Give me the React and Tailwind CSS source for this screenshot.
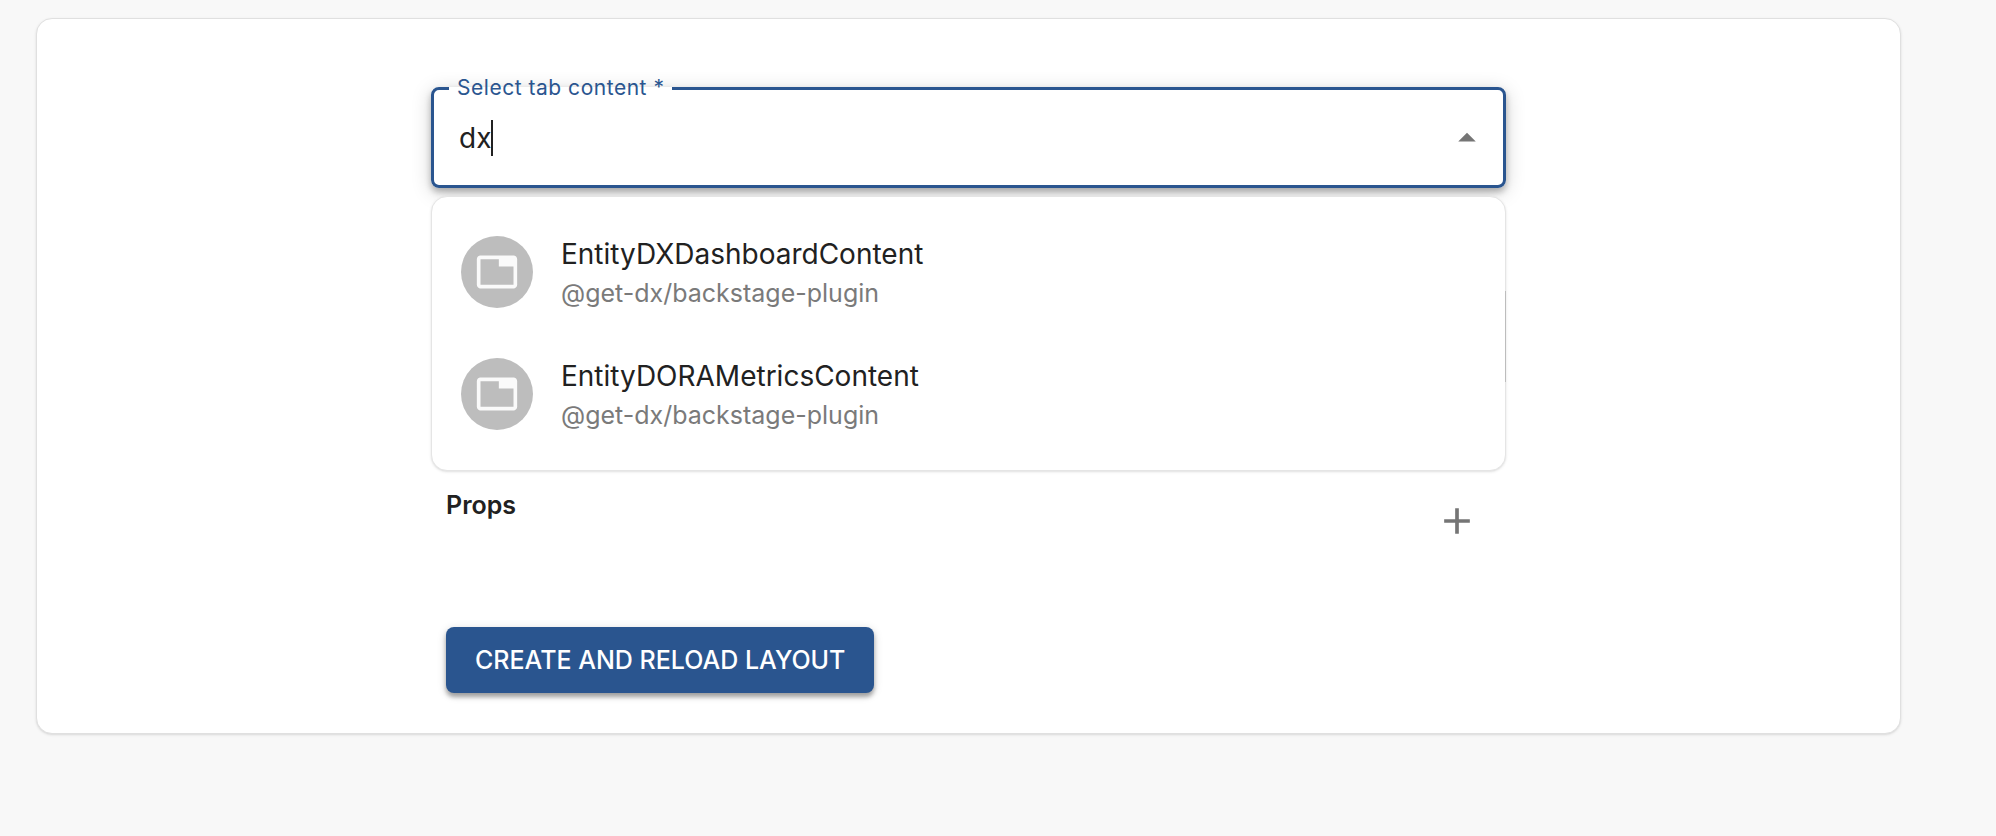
import React, { useState } from 'react';
import { MdAdd, MdArrowDropUp, MdTab } from 'react-icons/md';

const options = [
  { name: 'EntityDXDashboardContent', source: '@get-dx/backstage-plugin' },
  { name: 'EntityDORAMetricsContent', source: '@get-dx/backstage-plugin' },
];

const TabContentOption = ({ name, source }) => (
  <li role="option" aria-selected="false" className="flex items-center gap-7 px-[29px] h-[122px]">
    <span className="flex items-center justify-center size-[72px] rounded-full bg-[#bdbdbd] text-[#fafafa]">
      <MdTab size={44} />
    </span>
    <div>
      <div className="text-[28px] leading-[42px] text-[#212121]">{name}</div>
      <div className="text-[25px] leading-9 text-[#7a7a7a]">{source}</div>
    </div>
  </li>
);

const App = () => {
  const [query, setQuery] = useState('dx');

  return (
    <div className="min-h-screen bg-[#f8f8f8] pt-[18px] pl-9 pr-[95px] pb-9 font-['Inter',sans-serif] text-[#212121]">
      <main className="rounded-2xl border border-[#e0e0e0] bg-white shadow-sm px-8 pt-[53px] pb-10">
        <div className="mx-auto max-w-[1075px]">
          <fieldset className="rounded-lg border-3 border-[#2a558f] bg-white px-[15px] shadow-[0_4px_6px_rgba(0,0,0,0.25),0_4px_20px_rgba(0,0,0,0.18)]">
            <legend className="px-2 text-[21px] leading-8 tracking-wide text-[#2a558f]">
              <label htmlFor="tab-content">Select tab content *</label>
            </legend>
            <div className="flex h-[81px] items-center pl-2.5 pb-3.5">
              <input
                id="tab-content"
                type="text"
                role="combobox"
                aria-expanded="true"
                aria-controls="tab-content-list"
                value={query}
                onChange={(e) => setQuery(e.target.value)}
                className="field-sizing-content text-[28px] leading-9 outline-none"
              />
              <span className="h-9 w-0.5 bg-[#212121]" />
              <button type="button" aria-label="Close" className="ml-auto text-[#757575]">
                <MdArrowDropUp size={42} />
              </button>
            </div>
          </fieldset>

          <div className="relative mt-2 rounded-2xl border border-[#e5e5e5] bg-white pt-[14px] pb-[15px] shadow-sm">
            <ul id="tab-content-list" role="listbox">
              {options.map((option) => (
                <TabContentOption key={option.name} name={option.name} source={option.source} />
              ))}
            </ul>
            <span className="absolute -right-px top-[94px] h-[91px] w-px bg-[#bdbdbd]" />
          </div>

          <div className="flex justify-between px-[15px] pt-4">
            <h2 className="text-[25px] leading-9 font-semibold">Props</h2>
            <button type="button" aria-label="Add prop" className="mt-3 mr-3 text-[#757575]">
              <MdAdd size={44} />
            </button>
          </div>

          <button
            type="button"
            className="ml-[15px] mt-[84px] h-[66px] rounded-lg bg-[#2a558f] px-[29px] text-[25px] leading-9 font-medium text-white uppercase shadow-[0_4px_4px_rgba(0,0,0,0.3),0_2px_10px_rgba(0,0,0,0.16)]"
          >
            Create and reload layout
          </button>
        </div>
      </main>
    </div>
  );
};

export default App;
